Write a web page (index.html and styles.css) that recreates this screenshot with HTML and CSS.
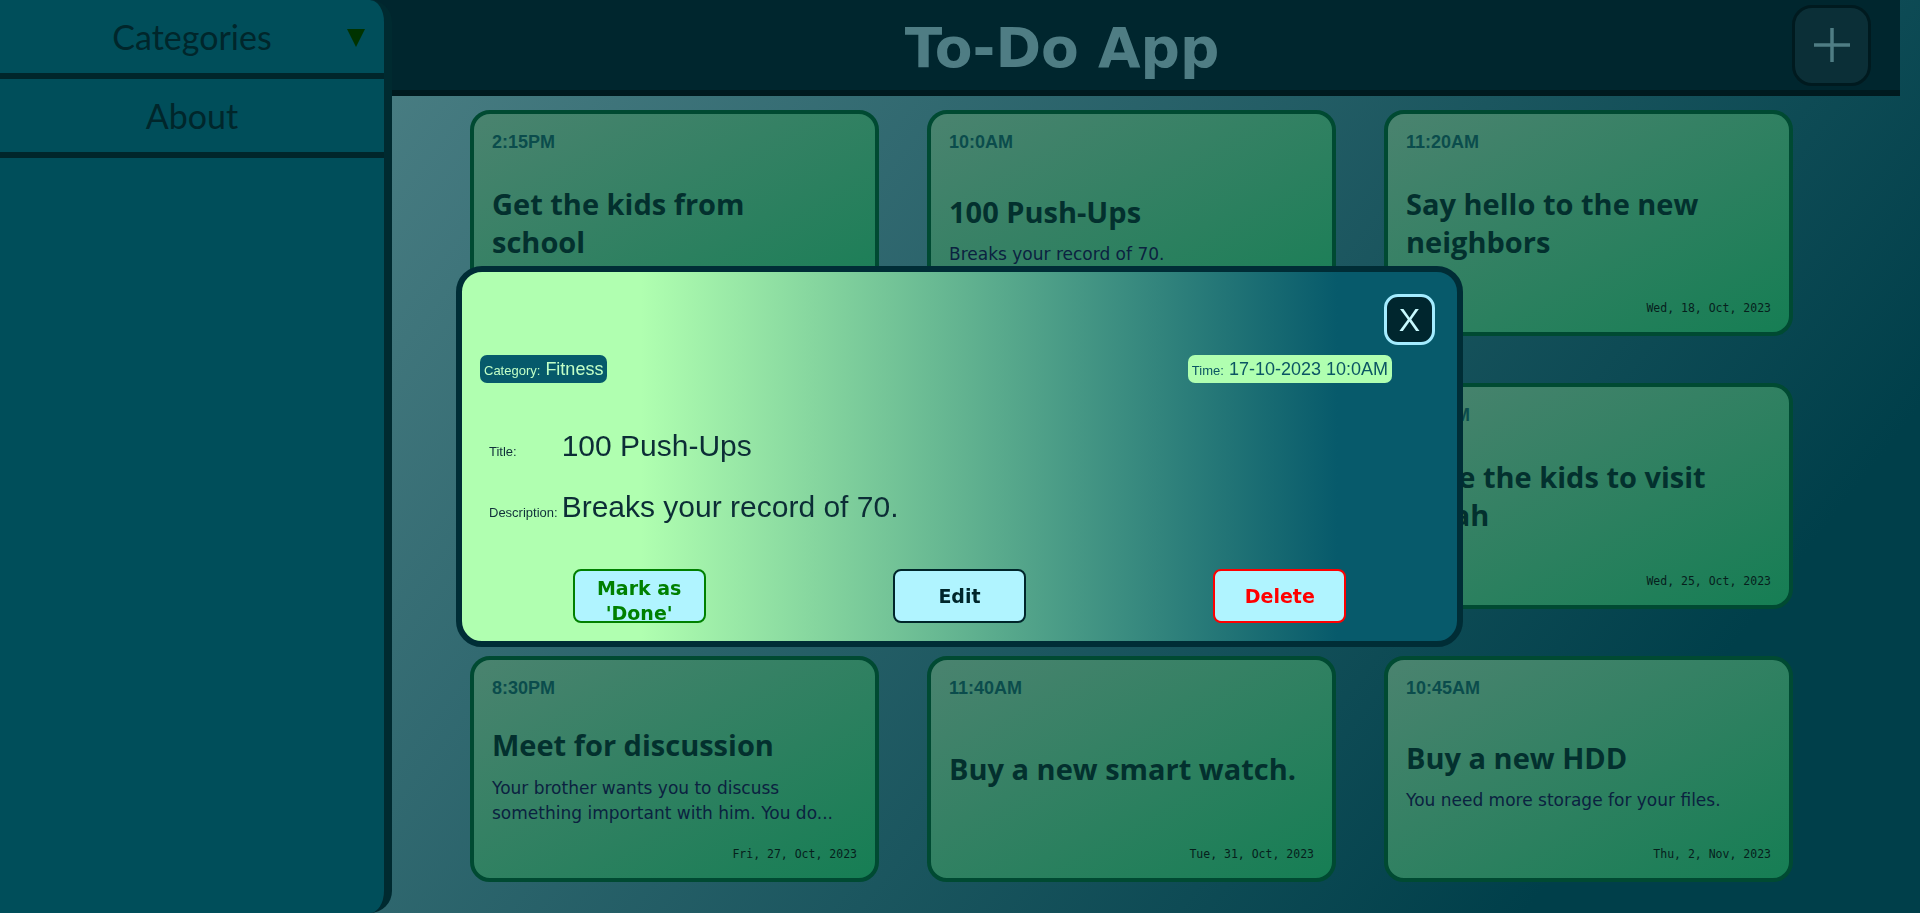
FILE: index.html
```html
<!DOCTYPE html>
<html lang="en">
<head>
<meta charset="utf-8">
<title>To-Do App</title>
<link rel="stylesheet" href="styles.css">
</head>
<body>
<aside class="drawer">
  <div class="nav-item nav-dropdown">
    <span class="nav-spacer"></span>
    <span class="nav-label">Categories</span>
    <svg class="caret" width="18" height="18" viewBox="0 0 18 18"><polygon points="0,0 18,0 9,18" fill="#003300"/></svg>
  </div>
  <div class="nav-item"><span class="nav-label">About</span></div>
</aside>

<div class="main">
  <header class="topbar">
    <h1 class="app-title">To-Do App</h1>
    <button class="add-btn" aria-label="Add task">
      <svg width="36" height="34" viewBox="0 0 36 34"><path d="M18 0V34M0 17H36" stroke="#4f7d84" stroke-width="3.5" fill="none"/></svg>
    </button>
  </header>

  <section class="grid">
    <article class="card">
      <div class="card-time">2:15PM</div>
      <div class="card-body">
        <h2 class="card-title">Get the kids from school</h2>
      </div>
      <div class="card-date">Mon, 16, Oct, 2023</div>
    </article>
    <article class="card">
      <div class="card-time">10:0AM</div>
      <div class="card-body">
        <h2 class="card-title">100 Push-Ups</h2>
        <p class="card-desc">Breaks your record of 70.</p>
      </div>
      <div class="card-date">Tue, 17, Oct, 2023</div>
    </article>
    <article class="card">
      <div class="card-time">11:20AM</div>
      <div class="card-body">
        <h2 class="card-title">Say hello to the new neighbors</h2>
      </div>
      <div class="card-date">Wed, 18, Oct, 2023</div>
    </article>
    <article class="card">
      <div class="card-time">6:00PM</div>
      <div class="card-body">
        <h2 class="card-title">Dinner with family</h2>
      </div>
      <div class="card-date">Fri, 20, Oct, 2023</div>
    </article>
    <article class="card">
      <div class="card-time">7:00AM</div>
      <div class="card-body">
        <h2 class="card-title">Morning run</h2>
      </div>
      <div class="card-date">Mon, 23, Oct, 2023</div>
    </article>
    <article class="card">
      <div class="card-time">9:00AM</div>
      <div class="card-body">
        <h2 class="card-title">Take the kids to visit Sarah</h2>
      </div>
      <div class="card-date">Wed, 25, Oct, 2023</div>
    </article>
    <article class="card">
      <div class="card-time">8:30PM</div>
      <div class="card-body">
        <h2 class="card-title">Meet for discussion</h2>
        <p class="card-desc">Your brother wants you to discuss something important with him. You do...</p>
      </div>
      <div class="card-date">Fri, 27, Oct, 2023</div>
    </article>
    <article class="card">
      <div class="card-time">11:40AM</div>
      <div class="card-body">
        <h2 class="card-title">Buy a new smart watch.</h2>
      </div>
      <div class="card-date">Tue, 31, Oct, 2023</div>
    </article>
    <article class="card">
      <div class="card-time">10:45AM</div>
      <div class="card-body">
        <h2 class="card-title">Buy a new HDD</h2>
        <p class="card-desc">You need more storage for your files.</p>
      </div>
      <div class="card-date">Thu, 2, Nov, 2023</div>
    </article>
  </section>
</div>

<div class="modal">
  <div class="modal-top">
    <button class="close-btn">X</button>
  </div>
  <div class="badges">
    <span class="badge badge-cat"><span class="badge-key">Category:</span> Fitness</span>
    <span class="badge badge-time"><span class="badge-key">Time:</span> 17-10-2023 10:0AM</span>
  </div>
  <div class="fields">
    <span class="field-label">Title:</span><span class="field-value">100 Push-Ups</span>
    <span class="field-label">Description:</span><span class="field-value">Breaks your record of 70.</span>
  </div>
  <div class="actions">
    <button class="act act-done">Mark as 'Done'</button>
    <button class="act act-edit">Edit</button>
    <button class="act act-delete">Delete</button>
  </div>
</div>
</body>
</html>
```

FILE: styles.css
```css
html, body {
  margin: 0;
  height: 100%;
}

body {
  overflow: hidden;
  font-family: "Liberation Sans", Arial, sans-serif;
  background: linear-gradient(128deg, rgb(90, 140, 144) 0%, rgb(0, 63, 74) 85%);
}

/* Drawer (overlays the header and board) */
.drawer {
  position: fixed;
  left: 0;
  top: 0;
  bottom: 0;
  width: 392px;
  box-sizing: border-box;
  background: #004e5a;
  border-right: 8px solid #002a30;
  border-radius: 0 22px 22px 0;
  z-index: 5;
}

.nav-item {
  height: 73px;
  border-bottom: 6px solid #00262b;
  display: flex;
  align-items: center;
  justify-content: center;
}

.nav-dropdown {
  display: grid;
  grid-template-columns: 1fr auto 1fr;
  padding-right: 19px;
  padding-left: 19px;
}

.caret {
  justify-self: end;
  margin-top: 2px;
}

.nav-label {
  font-family: Lato, "Open Sans", sans-serif;
  font-size: 34px;
  color: #00262b;
}

/* Main */
.main {
  display: flex;
  flex-direction: column;
}

.topbar {
  height: 90px;
  margin-right: 20px;
  padding-left: 392px;
  background: #00262e;
  border-bottom: 6px solid #001a1f;
  display: flex;
  align-items: center;
}

.app-title {
  flex: 1;
  margin: 6px 60px 0 0;
  text-align: center;
  font-family: "DejaVu Sans", Verdana, sans-serif;
  font-weight: bold;
  font-size: 55px;
  color: #4f7d84;
}

.add-btn {
  width: 79px;
  height: 81px;
  margin-right: 29px;
  box-sizing: border-box;
  border: 3px solid #001a1f;
  border-radius: 20px;
  background: #0b2f37;
  display: flex;
  align-items: center;
  justify-content: center;
  padding: 0;
}

.grid {
  display: grid;
  grid-template-columns: repeat(3, 409px);
  grid-auto-rows: 226px;
  column-gap: 48px;
  row-gap: 47px;
  padding: 14px 0 0 470px;
}

.card {
  box-sizing: border-box;
  border: 4px solid #004a32;
  border-radius: 20px;
  background: linear-gradient(to bottom right, #4a836f, #167e54);
  padding: 18px 18px 17px;
  display: flex;
  flex-direction: column;
}

.card-time {
  font-family: "Liberation Sans", Arial, sans-serif;
  font-weight: bold;
  font-size: 18px;
  line-height: 21px;
  color: #0b4c4c;
}

.card-body {
  flex: 1;
  display: flex;
  flex-direction: column;
  justify-content: center;
  padding-bottom: 8px;
}

.card-title {
  margin: 0;
  max-width: 350px;
  font-family: "Open Sans", sans-serif;
  font-weight: 700;
  font-size: 29px;
  line-height: 1.3;
  color: #03302e;
}

.card-desc {
  margin: 12px 0 -14px;
  font-family: "DejaVu Sans", sans-serif;
  font-size: 17px;
  line-height: 25px;
  color: #0b2240;
}

.card-date {
  text-align: right;
  font-family: "DejaVu Sans Mono", monospace;
  font-size: 11.5px;
  line-height: 14px;
  color: #06201c;
}

/* Modal */
.modal {
  position: fixed;
  left: 456px;
  top: 266px;
  width: 1007px;
  height: 381px;
  box-sizing: border-box;
  border: 6px solid #002d36;
  border-radius: 26px;
  background: linear-gradient(90deg, #b0ffb0 18%, #075a6b 88%);
  display: flex;
  flex-direction: column;
  z-index: 10;
}

.modal-top {
  display: flex;
  justify-content: flex-end;
  padding: 22px 22px 0;
}

.close-btn {
  width: 51px;
  height: 51px;
  box-sizing: border-box;
  border: 3px solid #a4ecff;
  border-radius: 14px;
  background: #00262e;
  color: #c8faff;
  font-family: "Liberation Sans", Arial, sans-serif;
  font-size: 32px;
  line-height: 1;
  padding: 0;
  display: flex;
  align-items: center;
  justify-content: center;
}

.badges {
  margin-top: 10px;
  padding: 0 65px 0 18px;
  display: flex;
  justify-content: space-between;
}

.badge {
  height: 28px;
  box-sizing: border-box;
  padding: 3px 4px;
  border-radius: 7px;
  font-size: 18px;
  line-height: 22px;
}

.badge-key {
  font-size: 13px;
}

.badge-cat {
  background: #065a6b;
  color: #c2ffc6;
}

.badge-time {
  background: #b0ffb0;
  color: #0b5563;
}

.fields {
  margin-top: 46px;
  padding-left: 27px;
  display: grid;
  grid-template-columns: auto 1fr;
  column-gap: 4px;
  row-gap: 27px;
  align-items: baseline;
}

.field-label {
  font-size: 13px;
  color: #10303a;
}

.field-value {
  font-size: 30px;
  line-height: 34px;
  color: #0c2d36;
}

.actions {
  margin-top: 45px;
  padding: 0 17px;
  display: flex;
  justify-content: space-around;
}

.act {
  width: 133px;
  height: 54px;
  box-sizing: border-box;
  border: 2px solid;
  border-radius: 8px;
  background: #b0f4ff;
  font-family: "DejaVu Sans", Verdana, sans-serif;
  font-weight: bold;
  font-size: 19px;
  line-height: 25px;
  padding: 0 4px;
  display: flex;
  align-items: center;
  justify-content: center;
  text-align: center;
}

.act-done {
  color: #008000;
  border-color: #008000;
  padding-top: 10px;
}

.act-edit {
  color: #00262b;
  border-color: #00262b;
}

.act-delete {
  color: #ff0000;
  border-color: #ff0000;
}
```
